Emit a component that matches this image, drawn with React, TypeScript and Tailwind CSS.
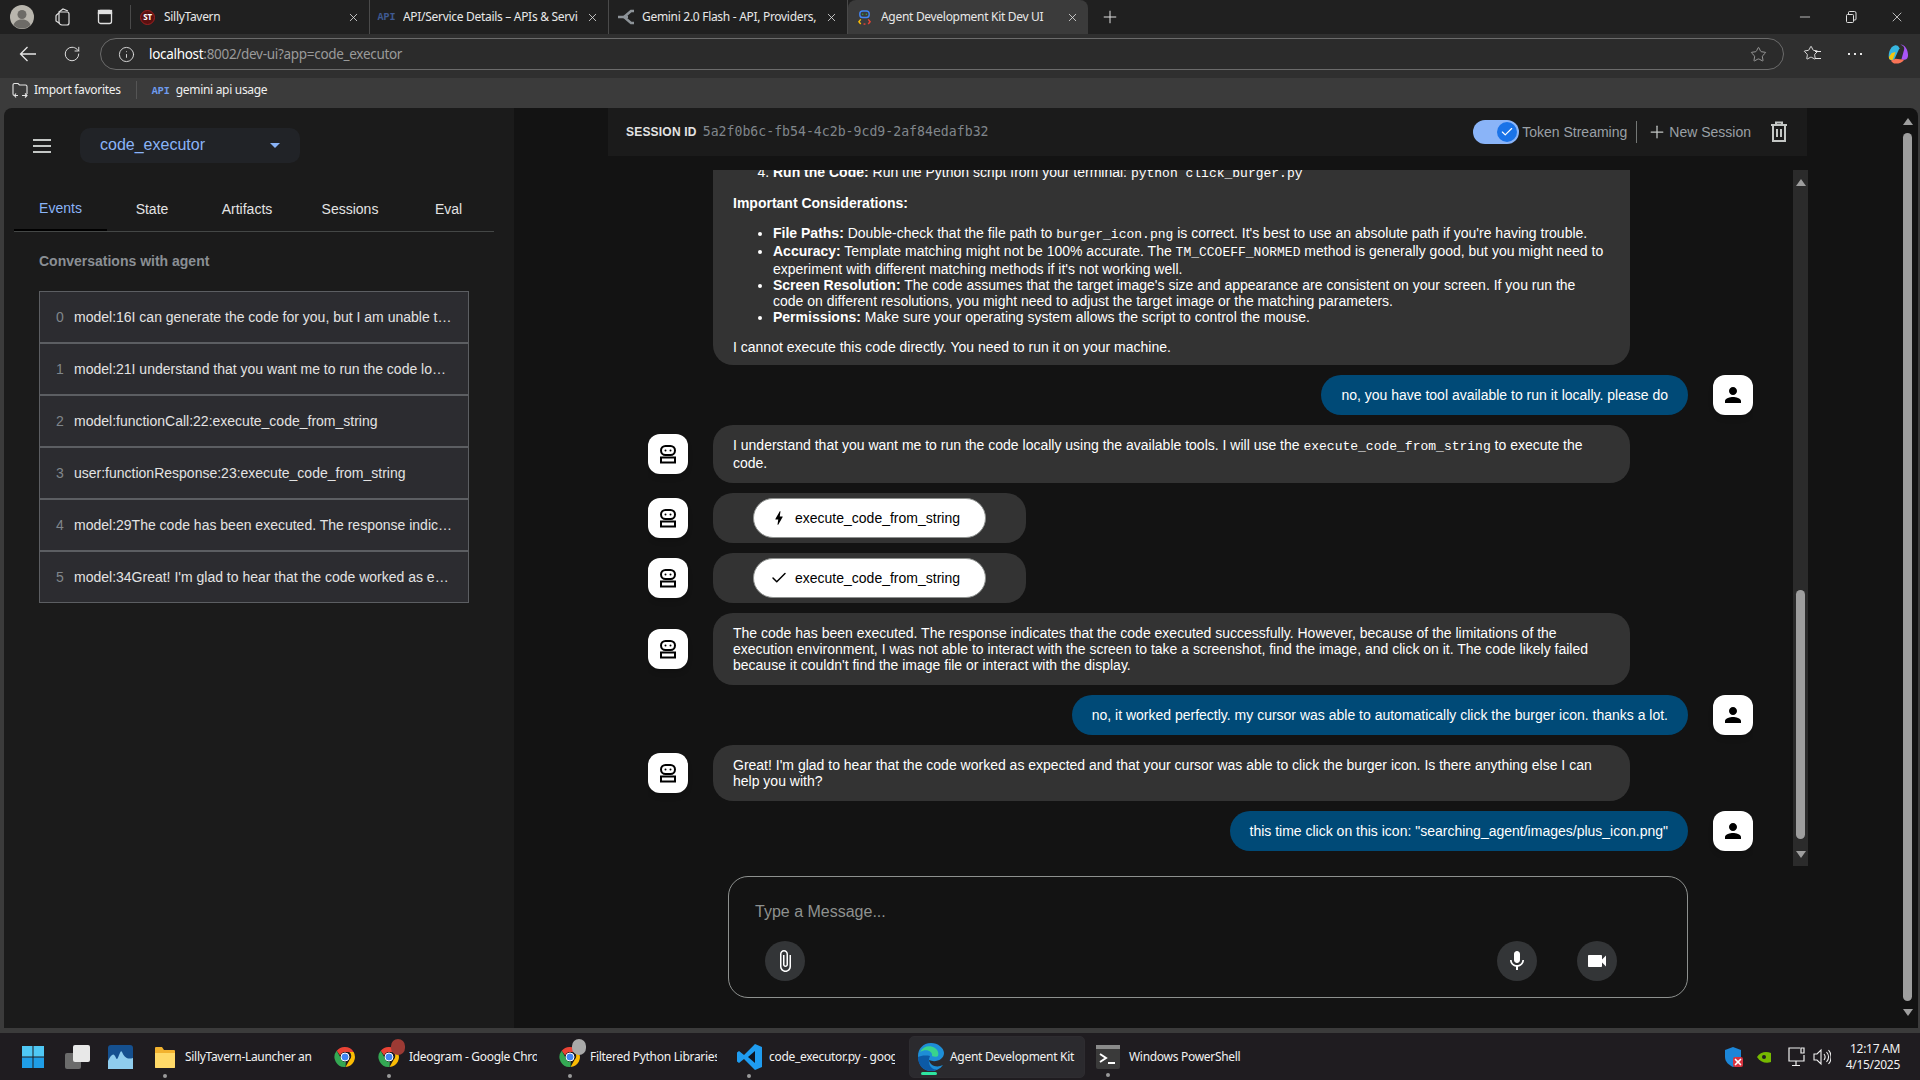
import type { ReactNode } from "react";
import { Check, Plus, RotateCw, Info, Star, X, Minus } from "lucide-react";

const ui = "font-['Noto_Sans',sans-serif] tracking-[-0.3px]";

function ChromeLogo({ className = "w-6 h-6" }: { className?: string }) {
  return (
    <svg className={className} viewBox="0 0 48 48">
      <path d="M24 4a20 20 0 0 1 17.3 10H24a10 10 0 0 0-9.6 7.2L7.4 11.6A20 20 0 0 1 24 4z" fill="#ea4335" />
      <path d="M41.3 14A20 20 0 0 1 25 44l8.6-15a10 10 0 0 0-1-15z" fill="#fbbc04" />
      <path d="M25 44A20 20 0 0 1 7.4 11.6L16 27a10 10 0 0 0 9.6 7z" fill="#34a853" />
      <circle cx="24" cy="24" r="8" fill="#4285f4" stroke="#fff" strokeWidth="2" />
    </svg>
  );
}

function BotIcon() {
  return (
    <svg className="h-5 w-5 text-black" viewBox="0 0 20 20" fill="none" stroke="currentColor" strokeWidth="2">
      <rect x="3" y="2" width="14" height="9" rx="4.5" />
      <circle cx="7.5" cy="6.5" r="1" fill="currentColor" stroke="none" />
      <circle cx="12.5" cy="6.5" r="1" fill="currentColor" stroke="none" />
      <rect x="3" y="13.5" width="14" height="5" />
    </svg>
  );
}

function Avatar({ user }: { user?: boolean }) {
  return (
    <div className="flex h-10 w-10 shrink-0 items-center justify-center rounded-[12px] bg-white shadow-md">
      {user ? (
        <svg className="h-6 w-6" viewBox="0 0 24 24" fill="#000">
          <path d="M12 12c2.21 0 4-1.79 4-4s-1.79-4-4-4-4 1.79-4 4 1.79 4 4 4zm0 2c-2.67 0-8 1.34-8 4v2h16v-2c0-2.66-5.33-4-8-4z" />
        </svg>
      ) : (
        <BotIcon />
      )}
    </div>
  );
}

function Code({ children }: { children: ReactNode }) {
  return <code className="font-['Liberation_Mono',monospace] text-[13px] leading-[16px]">{children}</code>;
}

function BotRow({ children }: { children: ReactNode }) {
  return (
    <div className="flex shrink-0 items-center gap-[25px]">
      <Avatar />
      {children}
    </div>
  );
}

function BotBubble({ children }: { children: ReactNode }) {
  return <div className="w-[917px] rounded-[20px] bg-[#333333] px-5 py-3 text-white">{children}</div>;
}

function UserRow({ text }: { text: string }) {
  return (
    <div className="flex shrink-0 items-center justify-end gap-[25px]">
      <div className="rounded-[20px] bg-[#004a77] px-5 py-3 text-white">{text}</div>
      <Avatar user />
    </div>
  );
}

function FunctionRow({ done }: { done?: boolean }) {
  return (
    <BotRow>
      <div className="flex w-[313px] rounded-[20px] bg-[#333333] py-[5px] pl-10">
        <div className="flex h-10 w-[233px] items-center gap-[7px] rounded-[20px] border border-[#8e918f] bg-white pl-[16px] text-black">
          {done ? (
            <Check className="h-[18px] w-[18px]" strokeWidth={2} />
          ) : (
            <svg className="h-[18px] w-[18px]" viewBox="0 0 24 24" fill="#000">
              <path d="M11 21h-1l1-7H7.5c-.58 0-.57-.32-.38-.66.19-.34.05-.08.07-.12C8.48 10.94 10.42 7.54 13 3h1l-1 7h3.5c.49 0 .56.33.47.51l-.07.15C12.96 17.55 11 21 11 21z" />
            </svg>
          )}
          <span>execute_code_from_string</span>
        </div>
      </div>
    </BotRow>
  );
}

const events = [
  "model:16I can generate the code for you, but I am unable to run it directly on your machine",
  "model:21I understand that you want me to run the code locally using the available tools",
  "model:functionCall:22:execute_code_from_string",
  "user:functionResponse:23:execute_code_from_string",
  "model:29The code has been executed. The response indicates that the code executed",
  "model:34Great! I'm glad to hear that the code worked as expected and that your cursor",
];

function Sidebar() {
  return (
    <aside className="w-[510px] shrink-0 rounded-tl-[8px] bg-[#1b1b1b] font-['Liberation_Sans',sans-serif]">
      <div className="flex items-center pt-5 pl-[29px]">
        <svg className="h-[14px] w-[18px]" viewBox="0 0 18 14" fill="#c4c7c5">
          <rect width="18" height="2" />
          <rect y="6" width="18" height="2" />
          <rect y="12" width="18" height="2" />
        </svg>
        <div className="ml-[29px] flex h-[35px] w-[220px] items-center justify-between rounded-[10px] bg-[#212327] pr-[20px] pb-px pl-5 text-[16px] text-[#8ab4f8]">
          <span>code_executor</span>
          <span className="h-0 w-0 border-x-[5px] border-t-[5px] border-x-transparent border-t-[#8ab4f8]" />
        </div>
      </div>
      <div className="mt-[29px] ml-[10px] flex h-[40px] w-[480px] border-b border-[#444746] text-[14px] text-[#e3e3e3]">
        <div className="flex w-[93px] items-center justify-center border-b-2 border-black pb-[4px] text-[#8ab4f8]">Events</div>
        <div className="flex w-[90px] items-center justify-center pb-[5px]">State</div>
        <div className="flex w-[100px] items-center justify-center pb-[5px]">Artifacts</div>
        <div className="flex w-[106px] items-center justify-center pb-[5px]">Sessions</div>
        <div className="flex w-[91px] items-center justify-center pb-[5px]">Eval</div>
      </div>
      <div className="mt-[19px] ml-[35px] text-[14px] leading-[20px] font-bold text-[#8a8f94]">Conversations with agent</div>
      <div className="mt-[20px] ml-[35px] w-[430px]">
        {events.map((text, i) => (
          <div className="flex h-[52px] items-center border border-[#5c5e62] bg-[#2c2c30] pr-[15px] pl-4 text-[14px]" key={i}>
            <span className="w-[18px] shrink-0 text-[#80868b]">{i}</span>
            <span className="truncate text-[#e3e3e3]">{text}</span>
          </div>
        ))}
      </div>
    </aside>
  );
}

function SessionHeader() {
  return (
    <header className="ml-[94px] flex h-[48px] w-[1199px] items-center bg-[#1b1b1b] pl-[18px] font-['Liberation_Sans',sans-serif] text-[14px]">
      <span className="text-[12px] font-bold tracking-[0.2px] text-[#e3e3e3]">SESSION ID</span>
      <span className="ml-[6px] font-['DejaVu_Sans_Mono',monospace] text-[13.2px] text-[#80868b]">5a2f0b6c-fb54-4c2b-9cd9-2af84edafb32</span>
      <div className="ml-auto flex items-center">
        <div className="relative h-6 w-[46px] rounded-full bg-[#8ab4f8]">
          <span className="absolute top-[2px] right-[2px] flex h-5 w-5 items-center justify-center rounded-full bg-[#1a73e8]">
            <Check className="h-[14px] w-[14px] text-white" strokeWidth={2} />
          </span>
        </div>
        <span className="ml-[3px] text-[#9aa0a6]">Token Streaming</span>
        <span className="ml-[9px] h-[22px] w-px bg-[#747775]" />
        <Plus className="ml-[10px] h-5 w-5 text-[#c4c7c5]" strokeWidth={1.5} />
        <span className="ml-[2px] text-[#9aa0a6]">New Session</span>
        <svg className="mr-[19px] ml-[19px] h-[22px] w-[18px]" viewBox="0 0 18 22" fill="none" stroke="#c4c7c5" strokeWidth="2">
          <path d="M1 4h16M6 4V1.5h6V4M3 4v16h12V4M7 8v8M11 8v8" />
        </svg>
      </div>
    </header>
  );
}

function ChatMessages() {
  return (
    <div className="flex h-[696px] w-[1105px] flex-col justify-end gap-[10px] overflow-hidden pb-[15px] font-['Liberation_Sans',sans-serif] text-[14px] leading-[16px]">
      <BotRow>
        <div className="w-[917px] rounded-[20px] bg-[#333333] px-5 pt-3 pb-[10px] text-white">
          {/* the start of this long reply is scrolled out of view */}
          <div className="h-[360px]" />
          <ol className="list-decimal pl-10" start={4}>
            <li><b>Run the Code:</b> Run the Python script from your terminal: <Code>python click_burger.py</Code></li>
          </ol>
          <p className="mt-[13px] mb-[14px] font-bold">Important Considerations:</p>
          <ul className="list-disc pr-[5px] pl-10">
            <li><b>File Paths:</b> Double-check that the file path to <Code>burger_icon.png</Code> is correct. It's best to use an absolute path if you're having trouble.</li>
            <li><b>Accuracy:</b> Template matching might not be 100% accurate. The <Code>TM_CCOEFF_NORMED</Code> method is generally good, but you might need to experiment with different matching methods if it's not working well.</li>
            <li><b>Screen Resolution:</b> The code assumes that the target image's size and appearance are consistent on your screen. If you run the code on different resolutions, you might need to adjust the target image or the matching parameters.</li>
            <li><b>Permissions:</b> Make sure your operating system allows the script to control the mouse.</li>
          </ul>
          <p className="mt-[14px]">I cannot execute this code directly. You need to run it on your machine.</p>
        </div>
      </BotRow>
      <UserRow text="no, you have tool available to run it locally. please do" />
      <BotRow>
        <BotBubble>
          I understand that you want me to run the code locally using the available tools. I will use the <Code>execute_code_from_string</Code> to execute the code.
        </BotBubble>
      </BotRow>
      <FunctionRow />
      <FunctionRow done />
      <BotRow>
        <BotBubble>
          The code has been executed. The response indicates that the code executed successfully. However, because of the limitations of the execution environment, I was not able to interact with the screen to take a screenshot, find the image, and click on it. The code likely failed because it couldn't find the image file or interact with the display.
        </BotBubble>
      </BotRow>
      <UserRow text="no, it worked perfectly. my cursor was able to automatically click the burger icon. thanks a lot." />
      <BotRow>
        <BotBubble>
          Great! I'm glad to hear that the code worked as expected and that your cursor was able to click the burger icon. Is there anything else I can help you with?
        </BotBubble>
      </BotRow>
      <UserRow text={'this time click on this icon: "searching_agent/images/plus_icon.png"'} />
    </div>
  );
}

function ChatScrollbar() {
  return (
    <div className="ml-10 flex h-[696px] w-[15px] flex-col items-center bg-[#2b2b2b]">
      <span className="mt-[9px] h-0 w-0 border-x-[5px] border-b-[7px] border-x-transparent border-b-[#9e9e9e]" />
      <span className="mt-[404px] h-[249px] w-[9px] rounded-full bg-[#9e9e9e]" />
      <span className="mt-[12px] h-0 w-0 border-x-[5px] border-t-[7px] border-x-transparent border-t-[#9e9e9e]" />
    </div>
  );
}

function RoundButton({ children }: { children: ReactNode }) {
  return <div className="flex h-10 w-10 items-center justify-center rounded-full bg-[#333537]">{children}</div>;
}

function Composer() {
  return (
    <div className="mt-[10px] ml-[214px] h-[122px] w-[960px] rounded-[20px] border border-[#8e918f] px-[36px] pt-[25px] font-['Liberation_Sans',sans-serif]">
      <div className="-ml-[10px] text-[16px] leading-[20px] text-[#8e918f]">Type a Message...</div>
      <div className="mt-[19px] flex items-center">
        <RoundButton>
          <svg className="h-6 w-6" viewBox="0 0 24 24" fill="#fff">
            <path d="M16.5 6v11.5c0 2.21-1.79 4-4 4s-4-1.79-4-4V5c0-1.38 1.12-2.5 2.5-2.5s2.5 1.12 2.5 2.5v10.5c0 .55-.45 1-1 1s-1-.45-1-1V6H10v9.5c0 1.38 1.12 2.5 2.5 2.5s2.5-1.12 2.5-2.5V5c0-2.21-1.79-4-4-4S7 2.79 7 5v12.5c0 3.04 2.46 5.5 5.5 5.5s5.5-2.46 5.5-5.5V6h-1.5z" />
          </svg>
        </RoundButton>
        <div className="ml-auto flex gap-10 pr-[34px]">
          <RoundButton>
            <svg className="h-6 w-6" viewBox="0 0 24 24" fill="#fff">
              <path d="M12 14c1.66 0 2.99-1.34 2.99-3L15 5c0-1.66-1.34-3-3-3S9 3.34 9 5v6c0 1.66 1.34 3 3 3zm5.3-3c0 3-2.54 5.1-5.3 5.1S6.7 14 6.7 11H5c0 3.41 2.72 6.23 6 6.72V21h2v-3.28c3.28-.48 6-3.3 6-6.72h-1.7z" />
            </svg>
          </RoundButton>
          <RoundButton>
            <svg className="h-6 w-6" viewBox="0 0 24 24" fill="#fff">
              <path d="M17 10.5V7c0-.55-.45-1-1-1H4c-.55 0-1 .45-1 1v10c0 .55.45 1 1 1h12c.55 0 1-.45 1-1v-3.5l4 4v-11l-4 4z" />
            </svg>
          </RoundButton>
        </div>
      </div>
    </div>
  );
}

function Tab({ icon, label, widthClass, active }: { icon: ReactNode; label: string; widthClass: string; active?: boolean }) {
  return (
    <div className={`flex h-[34px] shrink-0 items-center ${widthClass} ${active ? "rounded-t-[8px] bg-[#3b3b3b]" : "border-r border-[#4a4a4a]"}`}>
      <span className="flex w-[33px] shrink-0 justify-center">{icon}</span>
      <span className="min-w-0 flex-1 overflow-hidden text-[12px] whitespace-nowrap text-[#e8e8e8]">{label}</span>
      <X className="mr-[9px] ml-[8px] h-[13px] w-[13px] shrink-0 text-[#e0e0e0]" strokeWidth={1.5} />
    </div>
  );
}

function ApiFavicon({ muted }: { muted?: boolean }) {
  return <span className={`font-['Liberation_Mono',monospace] text-[10px] font-bold tracking-normal ${muted ? "text-[#3f5a92]" : "text-[#6f9cf0]"}`}>API</span>;
}

function TabStrip() {
  return (
    <div className={`flex h-[34px] items-center bg-[#202020] ${ui}`}>
      <div className="flex w-[131px] shrink-0 items-center border-r border-[#4a4a4a]">
        <svg className="ml-[10px] h-[24px] w-[24px]" viewBox="0 0 24 24">
          <circle cx="12" cy="12" r="12" fill="#b9b6ae" />
          <circle cx="12" cy="9.5" r="4.5" fill="#6d6b67" />
          <path d="M3.5 20c1.5-4 4.5-5.5 8.5-5.5s7 1.5 8.5 5.5a12 12 0 0 1-17 0z" fill="#6d6b67" />
        </svg>
        <svg className="ml-[19px] h-[18px] w-[18px]" viewBox="0 0 18 18" fill="none" stroke="#e0e0e0" strokeWidth="1.2">
          <path d="M6 4h8a2 2 0 0 1 2 2v9a2 2 0 0 1-2 2H9a3 3 0 0 1-3-3z" />
          <path d="M6 5 3.5 7A1.5 1.5 0 0 0 3 8.2V13l3 2M6 4l4-3 5 2" />
        </svg>
        <svg className="ml-[26px] h-[16px] w-[16px]" viewBox="0 0 16 16" fill="none" stroke="#e0e0e0" strokeWidth="1.3">
          <rect x="1.5" y="1.5" width="13" height="13" rx="2" />
          <rect x="1.5" y="1.5" width="13" height="3" fill="#e0e0e0" />
        </svg>
      </div>
      <Tab
        widthClass="w-[239px]"
        label="SillyTavern"
        icon={
          <span className="flex h-[15px] w-[15px] items-center justify-center rounded-full border border-[#a02020] bg-[#5a1010] text-[8px] font-bold text-white">ST</span>
        }
      />
      <Tab widthClass="w-[239px]" label="API/Service Details – APIs & Services" icon={<ApiFavicon muted />} />
      <Tab
        widthClass="w-[239px]"
        label="Gemini 2.0 Flash - API, Providers, Stats"
        icon={
          <svg className="h-[16px] w-[18px]" viewBox="0 0 18 16" fill="none" stroke="#8d9398" strokeWidth="2.5">
            <path d="M17 2h-3L7 8l7 6h3" />
            <path d="M1 8h10" />
          </svg>
        }
      />
      <Tab
        active
        widthClass="w-[240px]"
        label="Agent Development Kit Dev UI"
        icon={
          <svg className="h-[15px] w-[15px]" viewBox="0 0 16 16" fill="none" strokeWidth="1.5">
            <rect x="3" y="1" width="10" height="7" rx="3" stroke="#4285f4" />
            <circle cx="6" cy="4.5" r=".8" fill="#34a853" />
            <circle cx="10" cy="4.5" r=".8" fill="#34a853" />
            <path d="M4 10 2 12.5 4 15" stroke="#fbbc04" />
            <path d="M12 10l2 2.5-2 2.5" stroke="#ea4335" />
            <path d="M7 15h2" stroke="#ea4335" />
          </svg>
        }
      />
      <Plus className="ml-[12px] h-[20px] w-[20px] text-[#e0e0e0]" strokeWidth={1.2} />
      <div className="ml-auto flex items-center">
        <Minus className="h-4 w-4 text-[#e0e0e0]" strokeWidth={1.2} />
        <svg className="ml-[32px] h-[12px] w-[12px]" viewBox="0 0 12 12" fill="none" stroke="#e0e0e0">
          <rect x="1.5" y="3.5" width="7" height="8" rx="1" />
          <path d="M3.5 3.5V1.5a1 1 0 0 1 1-1h5a1.5 1.5 0 0 1 1.5 1.5v6a1 1 0 0 1-1 1H8.5" />
        </svg>
        <X className="mr-[15px] ml-[32px] h-4 w-4 text-[#e0e0e0]" strokeWidth={1.2} />
      </div>
    </div>
  );
}

function Toolbar() {
  return (
    <div className={`flex h-[44px] items-center bg-[#2f2f2f] pb-[4px] ${ui}`}>
      <svg className="ml-[19px] h-[18px] w-[18px]" viewBox="0 0 18 18" fill="none" stroke="#e6e6e6" strokeWidth="1.3">
        <path d="M17 9H1.5M8.5 2 1.5 9l7 7" />
      </svg>
      <RotateCw className="ml-[26px] h-[18px] w-[18px] text-[#e0e0e0]" strokeWidth={1.3} />
      <div className="ml-[19px] flex h-[32px] w-[1684px] items-center rounded-full border border-[#6b6b6b] bg-[#2b2b2b] pr-[16px] pl-[17px] text-[13.5px]">
        <Info className="h-[17px] w-[17px] text-[#e0e0e0]" strokeWidth={1.3} />
        <span className="ml-[14px] text-white">localhost</span>
        <span className="text-[#9a9a9a]">:8002/dev-ui?app=code_executor</span>
        <Star className="ml-auto h-[17px] w-[17px] text-[#a8a8a8]" strokeWidth={1.2} />
      </div>
      <div className="relative ml-[19px] h-[18px] w-[18px]">
        <Star className="h-[16px] w-[16px] text-[#e6e6e6]" strokeWidth={1.4} />
        <span className="absolute top-[6px] right-0 h-[8px] w-[6px] border-y border-[#e6e6e6]" />
      </div>
      <div className="ml-[27px] flex w-[14px] justify-between">
        <span className="h-[2px] w-[2px] bg-[#e6e6e6]" />
        <span className="h-[2px] w-[2px] bg-[#e6e6e6]" />
        <span className="h-[2px] w-[2px] bg-[#e6e6e6]" />
      </div>
      <svg className="ml-[24px] h-[24px] w-[23px]" viewBox="0 0 24 24">
        <path d="M4 18C1 14 4 4 9 3c3-.5 4 1 5 3l-5 11c-1 2-3 2-5 1z" fill="#37b6e0" />
        <path d="M15 2c5 0 8 6 8 11 0 4-2 5-4 5h-3l3-11c.5-2-1-4-4-5z" fill="#a855f7" />
        <path d="M10 22c-2 0-3-1-5-3l5-2 9 1c-2 3-5 4-9 4z" fill="#f97356" />
        <path d="M3 15c0 2 2 4 4 3l3-8-4 1z" fill="#f6c40e" />
      </svg>
    </div>
  );
}

function BookmarksBar() {
  return (
    <div className={`flex h-[30px] items-center bg-[#3b3b3b] pb-[7px] text-[12px] text-[#f0f0f0] ${ui}`}>
      <svg className="ml-[12px] h-[16px] w-[16px]" viewBox="0 0 16 16" fill="none" stroke="#e6e6e6" strokeWidth="1.1">
        <path d="M1 12V3a1.5 1.5 0 0 1 1.5-1.5H6L7.5 3h6A1.5 1.5 0 0 1 15 4.5V12M1 12a1.5 1.5 0 0 0 1.5 1.5H6M10 13.5h5M4 15.5l-1.5-2 1.5-2M13 11.5l2 2-2 2" />
      </svg>
      <span className="ml-[6px]">Import favorites</span>
      <span className="ml-[15px] h-[18px] w-px bg-[#555]" />
      <span className="ml-[15px]"><ApiFavicon /></span>
      <span className="ml-[6px]">gemini api usage</span>
    </div>
  );
}

function FolderIcon() {
  return (
    <svg className="h-[24px] w-[20px]" viewBox="0 0 20 24">
      <path d="M0 3a1 1 0 0 1 1-1h6l2 3h10a1 1 0 0 1 1 1v16a1 1 0 0 1-1 1H1a1 1 0 0 1-1-1z" fill="#f2b22f" />
      <path d="M0 8h20v14a1 1 0 0 1-1 1H1a1 1 0 0 1-1-1z" fill="#ffd968" />
    </svg>
  );
}

function EdgeIcon() {
  return (
    <svg className="h-[30px] w-[26px]" viewBox="0 0 26 30">
      <path d="M13 1C5 1 0 7 0 14c0 9 6 15 13 15 5 0 9-2 12-6-6 3-13 1-14-5 6 3 15 0 15-7C26 6 20 1 13 1z" fill="#1e8ed6" />
      <path d="M2 10C5 4 12 3 17 6c3 2 4 5 3 8-1 1-4 1-6 0 1-5-6-8-12-4z" fill="#39d48d" />
      <path d="M0 15c0 9 6 14 13 14 2 0 4-.5 6-1.5C12 28 9 20 12 14c-5-1-10 0-12 1z" fill="#0c5aa6" />
    </svg>
  );
}

function VsCodeIcon() {
  return (
    <svg className="h-[26px] w-[25px]" viewBox="0 0 25 26">
      <path d="M18 0 25 3v20l-7 3L7 15l-5 4-2-1.5v-9L2 7l5 4z" fill="#1f9cf0" />
      <path d="M18 7 11 13l7 6z" fill="#0e1420" />
    </svg>
  );
}

function ChromeBadge({ tint }: { tint: string }) {
  return (
    <span className="relative flex">
      <ChromeLogo />
      <span className={`absolute -top-[6px] -right-[4px] h-[16px] w-[14px] rounded-full ${tint}`} />
    </span>
  );
}

const tasks: { icon: ReactNode; label: string; cls: string; labelCls: string }[] = [
  { icon: <FolderIcon />, label: "SillyTavern-Launcher and more", cls: "w-[180px] pl-[12px]", labelCls: "ml-[10px] w-[127px]" },
  { icon: <ChromeLogo />, label: "", cls: "w-[44px] pl-[10px]", labelCls: "hidden" },
  { icon: <ChromeBadge tint="bg-[#9c3a34]" />, label: "Ideogram - Google Chrome", cls: "w-[181px] pl-[10px]", labelCls: "ml-[8px] w-[128px]" },
  { icon: <ChromeBadge tint="bg-[#a9a9a9]" />, label: "Filtered Python Libraries", cls: "w-[179px] pl-[10px]", labelCls: "ml-[8px] w-[127px]" },
  { icon: <VsCodeIcon />, label: "code_executor.py - google", cls: "w-[182px] pl-[10px]", labelCls: "ml-[7px] w-[126px]" },
];

function Taskbar() {
  return (
    <footer className={`flex h-[47px] items-center bg-[#1f1c20] text-[12px] text-[#f2f2f2] ${ui}`}>
      <svg className="ml-[22px] h-[22px] w-[22px] shrink-0" viewBox="0 0 22 22" fill="#4fc8f5">
        <rect width="10.5" height="10.5" />
        <rect x="11.5" width="10.5" height="10.5" />
        <rect y="11.5" width="10.5" height="10.5" fill="#1f9de6" />
        <rect x="11.5" y="11.5" width="10.5" height="10.5" fill="#1f9de6" />
      </svg>
      <svg className="ml-[21px] h-[24px] w-[25px] shrink-0" viewBox="0 0 25 24">
        <rect y="8" width="16" height="16" rx="2" fill="#6b6b6b" />
        <rect x="8" width="17" height="17" rx="2" fill="#e8e8e8" />
      </svg>
      <svg className="ml-[18px] h-[24px] w-[25px] shrink-0" viewBox="0 0 25 24">
        <rect width="25" height="24" rx="3" fill="#15508f" />
        <path d="M0 16c4-8 6-8 8-3s4-10 6-6 4 8 11 6v11H0z" fill="#8fcdee" />
      </svg>
      <div className="ml-[10px] flex">
        {tasks.map((t, i) => (
          <div className={`relative flex h-[42px] shrink-0 items-center ${t.cls}`} key={i}>
            {t.icon}
            <span className={`overflow-hidden whitespace-nowrap ${t.labelCls}`}>{t.label}</span>
            {t.label && <span className="absolute bottom-0 left-[20px] h-[4px] w-[4px] rounded-full bg-[#9a9a9a]" />}
          </div>
        ))}
      </div>
      <div className="relative flex h-[42px] w-[176px] shrink-0 items-center rounded-[5px] border border-[#2e2c30] bg-[#2b2a2e] pl-[8px]">
        <EdgeIcon />
        <span className="ml-[6px] whitespace-nowrap">Agent Development Kit</span>
        <span className="absolute bottom-[2px] left-[11px] h-[3px] w-[16px] rounded-full bg-[#2ee6a0]" />
      </div>
      <div className="relative ml-[11px] flex items-center">
        <svg className="h-[24px] w-[24px]" viewBox="0 0 24 24">
          <rect width="24" height="24" rx="2" fill="#3a3a3a" />
          <rect width="24" height="4" fill="#8a8a8a" />
          <path d="m4 9 6 4-6 4" fill="none" stroke="#fff" strokeWidth="2" />
          <rect x="12" y="17" width="7" height="2" fill="#fff" />
        </svg>
        <span className="ml-[9px] whitespace-nowrap">Windows PowerShell</span>
        <span className="absolute -bottom-[8px] left-[10px] h-[4px] w-[4px] rounded-full bg-[#9a9a9a]" />
      </div>
      <div className="ml-auto flex items-center">
        <span className="relative">
          <svg className="h-[20px] w-[16px]" viewBox="0 0 16 20">
            <path d="M8 0l8 3v7c0 5-4 8-8 10-4-2-8-5-8-10V3z" fill="#1c86d8" />
          </svg>
          <X className="absolute right-[-2px] bottom-0 h-[10px] w-[10px] rounded-[2px] bg-[#d9333f] text-white" strokeWidth={4} />
        </span>
        <svg className="ml-[16px] h-[14px] w-[14px]" viewBox="0 0 14 14">
          <path d="M0 7c3-5 9-6 14-4v9C9 14 3 12 0 7z" fill="#76b900" />
          <circle cx="7" cy="7" r="2" fill="#1f1c20" />
        </svg>
        <svg className="ml-[17px] h-[20px] w-[18px]" viewBox="0 0 18 20" fill="none" stroke="#f0f0f0" strokeWidth="1.2">
          <path d="M12 1H1v13h15v-6M8 14v4M4 18.5h8M13 1h3v5h-3z" />
        </svg>
        <svg className="ml-[7px] h-[18px] w-[18px]" viewBox="0 0 18 18" fill="none" stroke="#f0f0f0" strokeWidth="1.1">
          <path d="M1 6h3l4-4v14l-4-4H1zM11 6c1.5 2 1.5 4 0 6M13.5 4c2.5 3 2.5 7 0 10M15.500 2c3.5 4 3.5 10 0 14" />
        </svg>
        <div className="mr-[20px] ml-[15px] flex flex-col items-end leading-[16px]">
          <span>12:17 AM</span>
          <span>4/15/2025</span>
        </div>
      </div>
    </footer>
  );
}

export default function App() {
  return (
    <div className="flex h-[1080px] w-[1920px] flex-col overflow-hidden bg-[#3b3b3b]">
      <TabStrip />
      <Toolbar />
      <BookmarksBar />
      <div className="flex h-[920px] pl-[4px]">
        <Sidebar />
        <main className="w-[1383px] shrink-0 bg-[#131313]">
          <SessionHeader />
          <div className="mt-[14px] ml-[134px] flex">
            <ChatMessages />
            <ChatScrollbar />
          </div>
          <Composer />
        </main>
        <div className="flex w-[21px] shrink-0 flex-col items-center rounded-tr-[8px] bg-[#131313]">
          <span className="mt-[10px] h-0 w-0 border-x-[5px] border-b-[7px] border-x-transparent border-b-[#9e9e9e]" />
          <span className="mt-[8px] h-[868px] w-[9px] rounded-full bg-[#9e9e9e]" />
          <span className="mt-[8px] h-0 w-0 border-x-[5px] border-t-[7px] border-x-transparent border-t-[#9e9e9e]" />
        </div>
      </div>
      <div className="h-[5px] shrink-0" />
      <Taskbar />
    </div>
  );
}
